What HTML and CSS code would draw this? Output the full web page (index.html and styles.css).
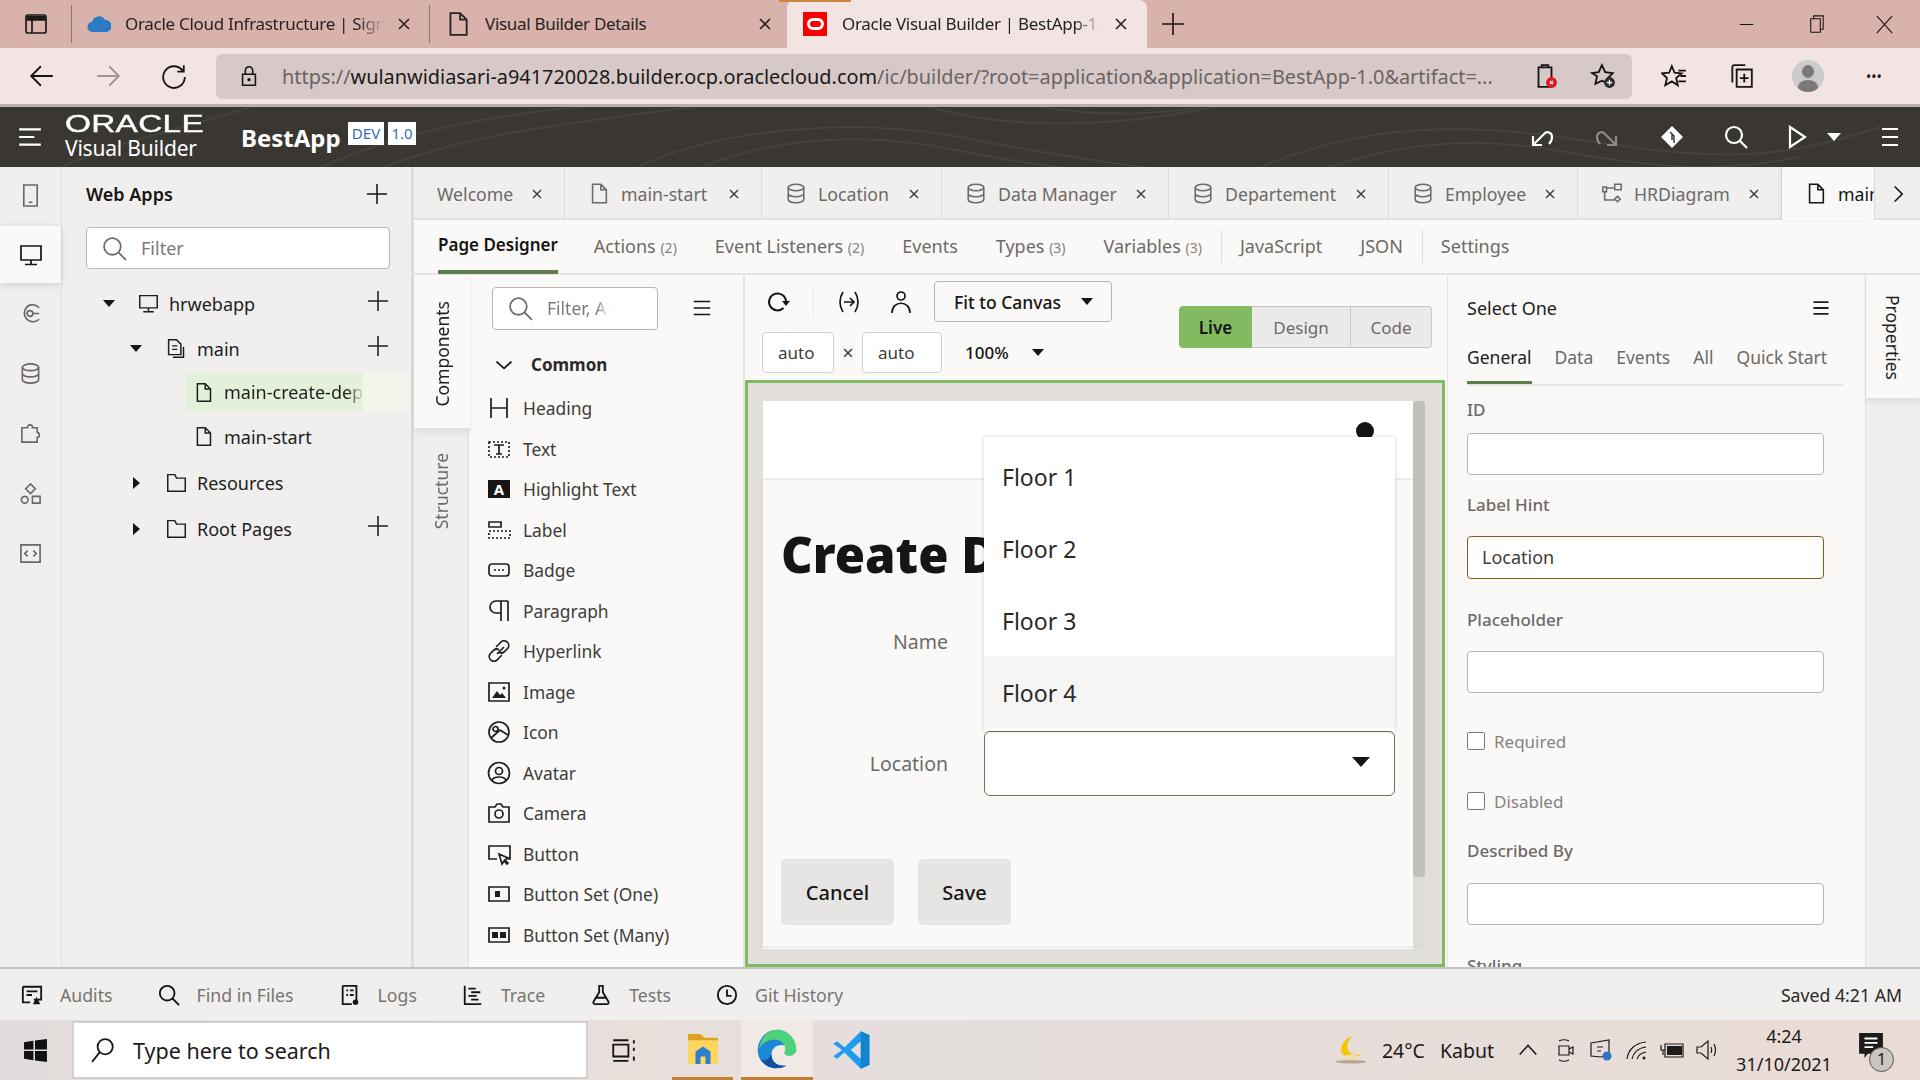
FILE: index.html
```html
<!DOCTYPE html>
<html lang="en">
<head>
  <meta charset="UTF-8">
  <title>Oracle Visual Builder | BestApp-1.0</title>
  <link rel="stylesheet" href="styles.css">
</head>
<body>
  <svg class="icon-defs" xmlns="http://www.w3.org/2000/svg">
    <symbol id="i-doc" viewBox="0 0 24 24"><path d="M5 2h9l6 6v14H5zM14 2v6h6"/></symbol>
    <symbol id="i-db" viewBox="0 0 24 24"><ellipse cx="12" cy="5.500" rx="8.500" ry="3.500"/><path d="M3.500 5.500v13c0 2 3.800 3.500 8.500 3.500s8.500-1.500 8.500-3.500v-13M3.500 12c0 2 3.800 3.500 8.500 3.500s8.500-1.500 8.500-3.500"/></symbol>
    <symbol id="i-plus" viewBox="0 0 24 24"><path d="M12 1v22M1 12h22"/></symbol>
    <symbol id="i-x" viewBox="0 0 24 24"><path d="M6 6l12 12M18 6L6 18"/></symbol>
    <symbol id="i-search" viewBox="0 0 24 24"><circle cx="10" cy="10" r="8"/><path d="M15.800 15.800L23 23"/></symbol>
    <symbol id="i-monitor" viewBox="0 0 24 24"><path d="M2 3h20v14H2zM12 17v4M6 21.500h12"/></symbol>
    <symbol id="i-folder" viewBox="0 0 24 24"><path d="M2 3h8l2 4h10v15H2z"/></symbol>
    <symbol id="i-menu" viewBox="0 0 24 24"><path d="M3 5h18M3 12h18M3 19h18"/></symbol>
    <symbol id="i-diagram" viewBox="0 0 24 24"><path d="M15 2h7v6h-7zM2 5h4v5H2zM15 18l3-3 3 3-3 3zM6 6h9M4 10v9h11"/></symbol>
  </svg>

  <div class="browser-tabs">
    <svg class="tabs-side" viewBox="0 0 24 24"><path d="M4 3h16a2 2 0 0 1 2 2v14a2 2 0 0 1-2 2H4a2 2 0 0 1-2-2V5a2 2 0 0 1 2-2zM2 8h20M8 8v13"/><path class="solid" d="M3 4h18v4H3z"/></svg>
    <div class="browser-tab first">
      <svg class="cloud" viewBox="0 0 24 24"><path d="M6 20a5 5 0 0 1-1-10 7 7 0 0 1 13-2 6 6 0 0 1 1 12z"/></svg>
      <span class="tab-label">Oracle Cloud Infrastructure | Sign In</span>
      <svg class="tab-close"><use href="#i-x"/></svg>
    </div>
    <div class="browser-tab second">
      <svg class="tab-doc"><use href="#i-doc"/></svg>
      <span class="tab-label">Visual Builder Details</span>
      <svg class="tab-close"><use href="#i-x"/></svg>
    </div>
    <div class="browser-tab current">
      <span class="oracle-fav"><i></i></span>
      <span class="tab-label">Oracle Visual Builder | BestApp-1.0</span>
      <svg class="tab-close"><use href="#i-x"/></svg>
    </div>
    <svg class="new-tab"><use href="#i-plus"/></svg>
    <div class="window-btns">
      <svg viewBox="0 0 24 24"><path d="M5 12h14"/></svg>
      <svg viewBox="0 0 24 24"><path d="M7 6h10v14H7zM10 6V3h10v14h-3"/></svg>
      <svg viewBox="0 0 24 24"><path d="M4 3l16 18M20 3L4 21"/></svg>
    </div>
  </div>

  <div class="browser-bar">
    <svg class="nav-icon" viewBox="0 0 24 24"><path d="M22 12H3M11 3l-9 9 9 9"/></svg>
    <svg class="nav-icon muted" viewBox="0 0 24 24"><path d="M2 12h19M13 3l9 9-9 9"/></svg>
    <svg class="nav-icon" viewBox="0 0 24 24"><path d="M20 7a10 10 0 1 0 2 6M21 2v6h-6"/></svg>
    <div class="url-bar">
      <svg class="lock" viewBox="0 0 24 24"><path d="M5 10h14v12H5zM8 10V6a4 4 0 0 1 8 0v4"/><circle cx="12" cy="16" r="1"/></svg>
      <span class="url"><span class="url-dim">https://</span>wulanwidiasari-a941720028.builder.ocp.oraclecloud.com<span class="url-dim">/ic/builder/?root=application&amp;application=BestApp-1.0&amp;artifact=...</span></span>
      <span class="url-icon">
        <svg viewBox="0 0 24 24"><path d="M6 4h12v18H6zM9 4V2h6v2"/><circle class="red-dot" cx="18" cy="18" r="5"/><path class="dot-mark" d="M16.500 16.500l3 3M19.500 16.500l-3 3"/></svg>
      </span>
      <span class="url-icon">
        <svg viewBox="0 0 24 24"><path d="M11 2l3 6.500 7 .8-5 5 1 5-6-3-6 3 1.500-7L2 9.300l6-.8z"/><circle class="dark-dot" cx="18" cy="18" r="5"/><path class="dot-mark" d="M18 15.500v5M15.500 18h5"/></svg>
      </span>
    </div>
    <svg class="bar-icon fav" viewBox="0 0 24 24"><path d="M10 3l2.500 6 6.500.6-5 4.400 1.500 6.500-5.500-3.500-6 3.500 1.500-6.500L1 9.600l6.500-.6zM16 7h7M18 12h5M16 17h7"/></svg>
    <svg class="bar-icon coll" viewBox="0 0 24 24"><path d="M8 6h14v16H8zM4 18V4a2 2 0 0 1 2-2h10M15 10v8M11 14h8"/></svg>
    <span class="profile"><i></i><b></b></span>
    <span class="more">&#8226;&#8226;&#8226;</span>
  </div>

  <header class="app-header">
    <svg class="wood" viewBox="0 0 1920 60" preserveAspectRatio="none">
      <path d="M300 70C420 10 560 0 700-10M360 70C470 20 600 15 760-10M620 70C700 20 860 10 960 30S1140 60 1220 70M680 70C760 30 860 24 950 42S1100 66 1160 70M900-10C1000 30 1140 20 1260-10M1000-10C1080 14 1180 10 1240-10M1240 70C1320 30 1420 10 1560 30S1760 60 1880 20M1300 70C1380 40 1460 26 1560 44S1720 66 1800 50M40 70C120 30 200 20 280-10"/>
    </svg>
    <svg class="hamburger" viewBox="0 0 24 24"><path d="M2 5h20M2 12h14M2 19h20"/></svg>
    <div class="brand">
      <span class="brand-top">ORACLE</span>
      <span class="brand-sub">Visual Builder</span>
    </div>
    <span class="app-name">BestApp</span>
    <span class="badge dev">DEV</span>
    <span class="badge ver">1.0</span>
    <div class="header-actions">
      <svg class="act-undo" viewBox="0 0 24 24"><path d="M3 11v9h9M4 19L15 8c3-2 7 0 7 4 0 3-1 5-3 7"/></svg>
      <svg class="act-redo" viewBox="0 0 24 24"><path d="M21 11v9h-9M20 19L9 8c-3-2-7 0-7 4 0 3 1 5 3 7"/></svg>
      <svg class="act-git" viewBox="0 0 24 24"><path class="solid-white" d="M12 1l11 11-11 11L1 12z"/><path class="git-line" d="M10 7l4 4v7M12 9v6"/></svg>
      <svg class="act-search"><use href="#i-search"/></svg>
      <svg class="act-play" viewBox="0 0 24 24"><path d="M5 2l15 10L5 22z"/></svg>
      <span class="act-caret"></span>
      <svg class="act-menu" viewBox="0 0 24 24"><path d="M4 4h16M4 12h16M4 20h16"/></svg>
    </div>
  </header>

  <main class="workspace">
    <nav class="rail">
      <div class="rail-item"><svg viewBox="0 0 24 24"><path d="M5 1h14v22H5zM10 19h4"/></svg></div>
      <div class="rail-item active"><svg class="dark"><use href="#i-monitor"/></svg></div>
      <div class="rail-item"><svg viewBox="0 0 24 24"><path d="M21 12H14M21 6a10 10 0 0 0-9-3 9 9 0 1 0 9 15"/><circle cx="11.500" cy="12" r="3"/></svg></div>
      <div class="rail-item"><svg><use href="#i-db"/></svg></div>
      <div class="rail-item"><svg viewBox="0 0 24 24"><path d="M3 6h6c-1-4 6-4 5 0h5v5c3 0 3 5 0 5v5H3z"/></svg></div>
      <div class="rail-item"><svg viewBox="0 0 24 24"><path d="M12 2l5 5-5 5-5-5zM14 15h8v7h-8z"/><circle cx="6" cy="18.500" r="3.500"/></svg></div>
      <div class="rail-item"><svg viewBox="0 0 24 24"><path d="M2 3h20v18H2zM9 9l-3 3 3 3M15 9l3 3-3 3"/></svg></div>
    </nav>

    <section class="nav-panel">
      <div class="nav-title"><h2>Web Apps</h2><svg class="add"><use href="#i-plus"/></svg></div>
      <div class="filter nav-filter">
        <svg><use href="#i-search"/></svg><span>Filter</span>
      </div>
      <ul class="tree">
        <li class="lvl1"><i class="tri down"></i><svg class="t-icon"><use href="#i-monitor"/></svg><span>hrwebapp</span><svg class="add"><use href="#i-plus"/></svg></li>
        <li class="lvl2"><i class="tri down"></i><svg class="t-icon" viewBox="0 0 24 24"><path d="M3 2h9l5 5v12H3zM7 9h6M7 13h6M20 10v12H8"/></svg><span>main</span><svg class="add"><use href="#i-plus"/></svg></li>
        <li class="lvl3 selected"><svg class="t-icon"><use href="#i-doc"/></svg><span class="cut">main-create-department</span></li>
        <li class="lvl3 start"><svg class="t-icon"><use href="#i-doc"/></svg><span>main-start</span></li>
        <li class="lvl2 gap"><i class="tri right"></i><svg class="t-icon"><use href="#i-folder"/></svg><span>Resources</span></li>
        <li class="lvl2"><i class="tri right"></i><svg class="t-icon"><use href="#i-folder"/></svg><span>Root Pages</span><svg class="add"><use href="#i-plus"/></svg></li>
      </ul>
    </section>

    <section class="editor">
      <div class="doc-tabs">
        <div class="doc-tab"><span>Welcome</span><svg class="close"><use href="#i-x"/></svg></div>
        <div class="doc-tab"><svg class="ico"><use href="#i-doc"/></svg><span>main-start</span><svg class="close"><use href="#i-x"/></svg></div>
        <div class="doc-tab"><svg class="ico"><use href="#i-db"/></svg><span>Location</span><svg class="close"><use href="#i-x"/></svg></div>
        <div class="doc-tab"><svg class="ico"><use href="#i-db"/></svg><span>Data Manager</span><svg class="close"><use href="#i-x"/></svg></div>
        <div class="doc-tab"><svg class="ico"><use href="#i-db"/></svg><span>Departement</span><svg class="close"><use href="#i-x"/></svg></div>
        <div class="doc-tab"><svg class="ico"><use href="#i-db"/></svg><span>Employee</span><svg class="close"><use href="#i-x"/></svg></div>
        <div class="doc-tab"><svg class="ico"><use href="#i-diagram"/></svg><span>HRDiagram</span><svg class="close"><use href="#i-x"/></svg></div>
        <div class="doc-tab current"><svg class="ico"><use href="#i-doc"/></svg><span>main-create</span></div>
        <div class="doc-next"><svg viewBox="0 0 24 24"><path d="M8 3l9 9-9 9"/></svg></div>
      </div>

      <div class="sub-tabs">
        <a class="active">Page Designer</a>
        <a>Actions <small>(2)</small></a>
        <a>Event Listeners <small>(2)</small></a>
        <a>Events</a>
        <a>Types <small>(3)</small></a>
        <a>Variables <small>(3)</small></a>
        <a class="split">JavaScript</a>
        <a>JSON</a>
        <a class="split">Settings</a>
      </div>

      <div class="editor-body">
        <div class="side-tabs">
          <div class="side-tab active"><span>Components</span></div>
          <div class="side-tab"><span>Structure</span></div>
        </div>

        <aside class="palette">
          <div class="palette-top">
            <div class="filter pal-filter"><svg><use href="#i-search"/></svg><span>Filter, Alt</span></div>
            <svg class="pal-menu"><use href="#i-menu"/></svg>
          </div>
          <div class="pal-group"><svg viewBox="0 0 24 24"><path d="M3 8l9 8 9-8"/></svg><b>Common</b></div>
          <ul class="pal-list">
            <li><svg viewBox="0 0 24 24"><path d="M4 2v20M20 2v20M4 12h16"/></svg>Heading</li>
            <li><svg viewBox="0 0 24 24"><path class="dots" d="M2 5h20v15H2z"/><path d="M7 8h10M12 8v9M9 17h6"/></svg>Text</li>
            <li><svg class="filled-a" viewBox="0 0 24 24"><rect x="1" y="3" width="22" height="18"/><text x="12" y="18" text-anchor="middle">A</text></svg>Highlight Text</li>
            <li><svg viewBox="0 0 24 24"><path d="M2 4h12v5H2z"/><path class="dots" d="M2 13h21v7H2z"/></svg>Label</li>
            <li><svg viewBox="0 0 24 24"><rect x="2" y="6" width="20" height="12" rx="3"/><path class="dots" d="M7 12h11"/></svg>Badge</li>
            <li><svg viewBox="0 0 24 24"><path d="M21 2H9a6 6 0 0 0 0 12h5M14 2v20M21 2v20"/></svg>Paragraph</li>
            <li><svg viewBox="0 0 24 24"><path d="M10 15l7-7M9 8l4-4a4 4 0 0 1 8 5l-4 4a4 4 0 0 1-5 0M15 16l-4 4a4 4 0 0 1-8-5l4-4a4 4 0 0 1 5 0"/></svg>Hyperlink</li>
            <li><svg viewBox="0 0 24 24"><path d="M2 3h20v18H2z"/><path class="solid" d="M5 18l5-7 3 4 2-2 4 5z"/><circle class="solid" cx="17" cy="8" r="1.500"/></svg>Image</li>
            <li><svg viewBox="0 0 24 24"><circle cx="12" cy="12" r="10"/><circle cx="8.500" cy="9" r="2.500"/><path d="M4 18l9-8 8 5"/></svg>Icon</li>
            <li><svg viewBox="0 0 24 24"><circle cx="12" cy="12" r="10.500"/><circle cx="12" cy="10" r="3.500"/><path d="M5 19c2-4 12-4 14 0"/></svg>Avatar</li>
            <li><svg viewBox="0 0 24 24"><path d="M2 6h6l2-3h4l2 3h6v15H2z"/><circle cx="12" cy="13" r="4"/></svg>Camera</li>
            <li><svg viewBox="0 0 24 24"><path d="M10 17H2V4h21v13h-2M12 12l3 10 2-3 3 3 1-1-3-3 3-2z"/></svg>Button</li>
            <li><svg viewBox="0 0 24 24"><path d="M2 5h20v14H2z"/><path class="solid" d="M8 9h5v6H8z"/></svg>Button Set (One)</li>
            <li><svg viewBox="0 0 24 24"><path d="M2 5h20v14H2z"/><path class="solid" d="M5 9h6v6H5zM13 9h6v6h-6z"/></svg>Button Set (Many)</li>
          </ul>
        </aside>

        <section class="designer">
          <div class="designer-tools">
            <div class="tool-rows">
              <div class="tool-row">
                <svg class="t-refresh" viewBox="0 0 24 24"><path d="M20 11a8.500 8.500 0 1 0-2.500 7"/><path class="solid" d="M16 11h8l-4 5z"/></svg>
                <i class="tool-sep"></i>
                <svg class="t-width" viewBox="0 0 24 24"><path d="M6 2C2 8 2 16 6 22M18 2c4 6 4 14 0 20M7 12h10M13 8l4 4-4 4"/></svg>
                <svg class="t-user" viewBox="0 0 24 24"><circle cx="12" cy="6" r="4"/><path d="M3 23c0-13 18-13 18 0"/></svg>
                <div class="fit-btn"><span>Fit to Canvas</span><i class="tri down"></i></div>
              </div>
              <div class="tool-row size-row">
                <span class="size-box first">auto</span>
                <span class="times">&times;</span>
                <span class="size-box second">auto</span>
                <span class="zoom-val">100%</span>
                <i class="tri down"></i>
              </div>
            </div>
            <div class="segmented">
              <span class="seg live">Live</span>
              <span class="seg design">Design</span>
              <span class="seg code">Code</span>
            </div>
          </div>

          <div class="canvas">
            <div class="page">
              <div class="page-head"></div>
              <div class="page-body">
                <h1>Create Department</h1>
                <div class="form-row"><label>Name</label><div class="field"></div></div>
                <div class="form-row"><label>Location</label><div class="field select"><i class="tri down"></i></div></div>
                <div class="btn-row"><button>Cancel</button><button>Save</button></div>
                <div class="page-foot"></div>
              </div>
              <span class="user-dot"></span>
              <ul class="popup">
                <li>Floor 1</li>
                <li>Floor 2</li>
                <li>Floor 3</li>
                <li class="hover">Floor 4</li>
              </ul>
            </div>
            <div class="scrollbar"><i></i></div>
          </div>
        </section>

        <aside class="props">
          <div class="props-head"><span>Select One</span><svg><use href="#i-menu"/></svg></div>
          <div class="props-tabs">
            <a class="active">General</a><a>Data</a><a>Events</a><a>All</a><a>Quick Start</a>
          </div>
          <label class="p-label first">ID</label>
          <div class="p-input"></div>
          <label class="p-label hint">Label Hint</label>
          <div class="p-input focus">Location</div>
          <label class="p-label">Placeholder</label>
          <div class="p-input"></div>
          <div class="check first"><i></i>Required</div>
          <div class="check"><i></i>Disabled</div>
          <label class="p-label described">Described By</label>
          <div class="p-input"></div>
          <label class="p-label">Styling</label>
        </aside>

        <div class="prop-rail"><div class="prop-tab"><span>Properties</span></div></div>
      </div>
    </section>
  </main>

  <footer class="tool-bar">
    <span class="tool-item"><svg viewBox="0 0 24 24"><path d="M2 3h20v14h-8M2 3v17h8M6 8h12M6 12h6"/><path class="solid" d="M17 14l4 8h-8z"/></svg>Audits</span>
    <span class="tool-item"><svg><use href="#i-search"/></svg>Find in Files</span>
    <span class="tool-item"><svg viewBox="0 0 24 24"><path d="M4 2h15v16M4 2v20h10M8 7h2M12 7h4M8 12h2M12 12h4"/><circle class="solid" cx="18" cy="20" r="3"/></svg>Logs</span>
    <span class="tool-item"><svg viewBox="0 0 24 24"><path d="M3 2v20h18M7 5h8M10 9h10M7 13h9M10 17h8"/></svg>Trace</span>
    <span class="tool-item"><svg viewBox="0 0 24 24"><path d="M9 2h6M10 2v7L4 19c-1 2 0 3 2 3h12c2 0 3-1 2-3l-6-10V2M7 15h10"/></svg>Tests</span>
    <span class="tool-item"><svg viewBox="0 0 24 24"><circle cx="12" cy="12" r="10"/><path d="M12 6v7h5"/></svg>Git History</span>
    <span class="saved">Saved 4:21 AM</span>
  </footer>

  <div class="taskbar">
    <svg class="win-logo" viewBox="0 0 24 24"><path d="M1 4l9-1.300V11H1zM11.500 2.400L23 1v10H11.500zM1 12.500h9v8.800L1 20zM11.500 12.500H23V23l-11.500-1.500z"/></svg>
    <div class="task-search">
      <svg viewBox="0 0 24 24"><circle cx="14" cy="9" r="7"/><path d="M9 14L2 23"/></svg>
      <span>Type here to search</span>
    </div>
    <svg class="task-view" viewBox="0 0 24 24"><path d="M3 3h14M3 7h14v11H3zM3 22h14M22 3v3M22 10v3M22 18v4"/></svg>
    <span class="task-app files">
      <svg viewBox="0 0 32 32"><path fill="#dca31d" d="M4 4h10l3 3h11v6H4z"/><path fill="#fcd65f" d="M4 9h24v19H4z"/><path fill="#2f7fd1" d="M10 28V18l6-4 6 4v10h-4v-6h-4v6z"/></svg>
    </span>
    <span class="task-app edge">
      <svg viewBox="0 0 32 32"><path fill="#1d87d6" d="M16 2C8 2 2 9 2 17c0 7 6 13 13 13 3 0 6-1 8-2-6 1-11-2-11-8 0-4 3-7 7-7s6 2 6 5h5C30 9 24 2 16 2z"/><path fill="#4fd07a" d="M16 2c7 0 14 6 14 14 0 3-2 5-5 5-2 0-3-1-4-2 1-1 1-2 1-3 0-4-4-7-8-7-5 0-9 3-11 7C4 8 9 2 16 2z"/><path fill="#114f9e" d="M12 20c0 6 5 9 11 8-2 1.500-5 2-8 2-5 0-9-3-11-7 2 2 5 2 8-3z"/></svg>
    </span>
    <span class="task-app code-app">
      <svg viewBox="0 0 32 32"><path fill="#1f9cf0" d="M23 1l7 3v24l-7 3-13-13-6 5-3-2 7-5-7-5 3-2 6 5zM23 9l-8 7 8 7z"/><path fill="#0065a9" d="M23 1l7 3v24l-7 3z" opacity=".45"/></svg>
    </span>
    <div class="tray">
      <svg class="weather" viewBox="0 0 40 32"><path fill="#f7c400" d="M22 1c-8 6-9 18 2 20 4 1 7 0 8-1-3 6-16 8-21 1C6 14 12 3 22 1z"/><ellipse cx="20" cy="24" rx="9" ry="3" fill="#efdcb8"/><ellipse cx="20" cy="29" rx="17" ry="2" fill="#b9a58e"/></svg>
      <span class="temp">24°C</span>
      <span class="cond">Kabut</span>
      <svg class="chev" viewBox="0 0 24 24"><path d="M3 17l9-10 9 10"/></svg>
      <svg class="tray-i meet" viewBox="0 0 24 24"><path d="M6 8h10v9H6zM16 11l4-2v7l-4-2M6 3c3-1.500 7-1.500 10 0M6 22c3 1.500 7 1.500 10 0"/></svg>
      <svg class="tray-i sync" viewBox="0 0 24 24"><path d="M3 5l18-3v14l-8 3-10-1zM9 9h6M9 13h4"/><circle class="blue-dot" cx="19" cy="18" r="4.500"/></svg>
      <svg class="tray-i wifi" viewBox="0 0 24 24"><path d="M2 21C3 12 10 5 21 4M7 21c1-6 6-11 14-12M12 21c1-3 4-6 9-7"/><circle class="solid" cx="19" cy="20" r="1.500"/></svg>
      <svg class="tray-i batt" viewBox="0 0 24 24"><path class="solid" d="M7 8h15v9H7z"/><path d="M5 6h18v13H5zM1 7v5h4M3 12v5"/></svg>
      <svg class="tray-i vol" viewBox="0 0 24 24"><path d="M2 9h4l7-6v18l-7-6H2zM16 9c1 2 1 4 0 6M19 6c2 4 2 8 0 12"/></svg>
      <div class="clock"><span>4:24</span><span>31/10/2021</span></div>
      <div class="notif"><svg viewBox="0 0 24 24"><path class="solid" d="M1 1h22v19H9l-3 4v-4H1z"/><path class="note-lines" d="M6 6h12M6 10h12M6 14h8"/></svg><b>1</b></div>
    </div>
  </div>
</body>
</html>
```

FILE: styles.css
```css
* {
  box-sizing: border-box;
}

html, body {
  margin: 0;
  width: 1920px;
  height: 1080px;
  overflow: hidden;
}

body {
  font-family: "Noto Sans", "Open Sans", sans-serif;
  color: #161513;
  background: #f0efed;
}

svg {
  fill: none;
  stroke: currentColor;
  stroke-width: 1.700;
  flex: none;
}

ul {
  list-style: none;
  margin: 0;
  padding: 0;
}

.icon-defs {
  display: none;
}

.solid {
  fill: currentColor;
  stroke: none;
}

.tri {
  display: block;
  width: 0;
  height: 0;
  flex: none;
}

.tri.down {
  border-left: 6px solid transparent;
  border-right: 6px solid transparent;
  border-top: 7px solid #161513;
}

.tri.right {
  border-top: 6px solid transparent;
  border-bottom: 6px solid transparent;
  border-left: 7px solid #161513;
}

/* browser chrome */
.browser-tabs {
  height: 48px;
  background: #d8b2ab;
  display: flex;
  align-items: center;
  position: relative;
}

/* loading strip of the window behind, sits over the tab edge */
.browser-tabs::before {
  content: "";
  position: absolute;
  left: 779px;
  top: 0;
  width: 72px;
  height: 2px;
  background: #c9893f;
  z-index: 1;
}

.tabs-side {
  width: 24px;
  height: 24px;
  margin-left: 24px;
  margin-right: 23px;
  color: #1c1a1a;
}

.browser-tab {
  height: 48px;
  display: flex;
  align-items: center;
  font-size: 17px;
  letter-spacing: -0.300px;
  color: #262323;
  flex: none;
}

.browser-tab.first {
  width: 358px;
}

.browser-tab.first::before,
.browser-tab.second::before {
  content: "";
  width: 1px;
  height: 38px;
  background: #8d7471;
  flex: none;
  margin-right: 15px;
}

.browser-tab.second {
  width: 358px;
}

.browser-tab.current {
  width: 360px;
  background: #f1e4e3;
  border-radius: 8px 8px 0 0;
  padding-left: 16px;
}

.cloud {
  width: 24px;
  height: 24px;
  fill: #2a7ac6;
  stroke: none;
  margin-right: 14px;
}

.tab-doc {
  width: 26px;
  height: 28px;
  margin-right: 14px;
}

.first .tab-label {
  width: 259px;
}

.second .tab-label {
  width: 265px;
}

.current .tab-label {
  width: 259px;
}

.tab-label {
  white-space: nowrap;
  overflow: hidden;
  margin-top: -2px;
  -webkit-mask-image: linear-gradient(90deg, #000 90%, transparent);
  mask-image: linear-gradient(90deg, #000 90%, transparent);
}

.second .tab-label {
  -webkit-mask-image: none;
  mask-image: none;
}

.tab-close {
  width: 20px;
  height: 20px;
  margin-left: 10px;
  stroke-width: 2;
}

.second .tab-close {
  margin-left: 5px;
}

.oracle-fav {
  width: 24px;
  height: 24px;
  background: #f80000;
  display: flex;
  align-items: center;
  justify-content: center;
  margin-right: 15px;
  flex: none;
}

.oracle-fav i {
  width: 17px;
  height: 12px;
  border: 3px solid #fff;
  border-radius: 6px;
}

.new-tab {
  width: 24px;
  height: 24px;
  margin-left: 14px;
  stroke-width: 1.600;
}

.window-btns {
  margin-left: auto;
  display: flex;
  gap: 46px;
  padding-right: 24px;
}

.window-btns svg {
  width: 23px;
  height: 23px;
  stroke-width: 1.100;
}

.browser-bar {
  height: 59px;
  background: #f1e4e3;
  border-bottom: 3px solid #bdaeac;
  display: flex;
  align-items: center;
  padding-left: 29px;
}

.nav-icon {
  width: 26px;
  height: 26px;
  margin-right: 40px;
}

.nav-icon.muted {
  color: #a09392;
}

.url-bar {
  width: 1416px;
  height: 45px;
  margin-left: -11px;
  background: #d6c9c8;
  border-radius: 6px;
  display: flex;
  align-items: center;
  padding-left: 22px;
  flex: none;
}

.lock {
  width: 22px;
  height: 24px;
  margin-right: 22px;
}

.url {
  font-size: 19.900px;
  color: #1c1a1a;
  white-space: nowrap;
  width: 1213px;
  overflow: hidden;
  flex: none;
  margin-right: 21px;
}

.url-dim {
  color: #6b6464;
}

.url-icon {
  width: 58px;
  display: flex;
  justify-content: center;
  flex: none;
}

.url-icon svg {
  width: 26px;
  height: 28px;
}

.red-dot {
  fill: #e81123;
  stroke: none;
}

.dark-dot {
  fill: #2b2a2a;
  stroke: none;
}

.dot-mark {
  stroke: #fff;
  stroke-width: 1.200;
}

.bar-icon {
  width: 26px;
  height: 26px;
}

.bar-icon.fav {
  margin-left: 29px;
}

.bar-icon.coll {
  margin-left: 41px;
}

.profile {
  width: 32px;
  height: 32px;
  margin-left: 38px;
  border-radius: 50%;
  background: #cdcaca;
  position: relative;
  overflow: hidden;
  flex: none;
}

.profile i {
  position: absolute;
  left: 10px;
  top: 5px;
  width: 12px;
  height: 13px;
  border-radius: 50%;
  background: #7b7878;
}

.profile b {
  position: absolute;
  left: 6px;
  top: 20px;
  width: 20px;
  height: 14px;
  border-radius: 50%;
  background: #7b7878;
}

.more {
  margin-left: 42px;
  font-size: 14px;
  letter-spacing: 0;
}

/* app header */
.app-header {
  height: 60px;
  background: #3a3632;
  color: #fff;
  display: flex;
  align-items: center;
  position: relative;
  overflow: hidden;
}

.wood {
  position: absolute;
  inset: 0;
  width: 100%;
  height: 100%;
  stroke: #45413c;
  stroke-width: 2;
}

.hamburger {
  width: 26px;
  height: 26px;
  margin-left: 17px;
  stroke-width: 2;
  position: relative;
}

.brand {
  margin-left: 22px;
  width: 176px;
  display: flex;
  flex-direction: column;
  position: relative;
}

.brand-top {
  font-family: "Liberation Sans", sans-serif;
  font-size: 23.500px;
  line-height: 22px;
  letter-spacing: 0.200px;
  transform: scaleX(1.420);
  transform-origin: left;
  -webkit-text-stroke: 0.400px #fff;
}

.brand-sub {
  font-size: 21px;
  line-height: 26px;
  letter-spacing: -0.200px;
}

.app-name {
  font-size: 24px;
  font-weight: 700;
  position: relative;
  width: 107px;
}

.badge {
  height: 23px;
  background: #fff;
  color: #2f6fb0;
  font-size: 15px;
  line-height: 23px;
  text-align: center;
  margin-top: -8px;
  position: relative;
}

.badge.dev {
  width: 36px;
}

.badge.ver {
  width: 28px;
  margin-left: 4px;
}

.header-actions {
  margin-left: auto;
  display: flex;
  align-items: center;
  position: relative;
}

.header-actions svg {
  width: 24px;
  height: 24px;
  stroke-width: 2.200;
}

.act-redo {
  margin-left: 41px;
  color: #8d8a86;
}

.header-actions .act-git {
  margin-left: 41px;
}

.solid-white {
  fill: #fff;
  stroke: none;
}

.git-line {
  stroke: #3a3632;
  stroke-width: 1.500;
}

.act-search {
  margin-left: 40px;
}

.act-play {
  margin-left: 37px;
}

.act-caret {
  margin-left: 18px;
  border-left: 7px solid transparent;
  border-right: 7px solid transparent;
  border-top: 8px solid #fff;
}

.act-menu {
  margin-left: 37px;
  margin-right: 18px;
}

/* main area */
.workspace {
  height: 800px;
  display: flex;
  background: #f0efed;
}

.rail {
  width: 62px;
  flex: none;
  border-right: 1px solid #e2e0dd;
}

.rail-item {
  height: 60px;
  display: flex;
  align-items: center;
  justify-content: center;
  color: #6d6663;
}

.rail-item:first-child {
  height: 56px;
}

.rail-item svg {
  width: 23px;
  height: 23px;
}

.rail-item.active {
  background: #faf9f7;
  width: 61px;
  height: 57px;
  margin-top: 3px;
  box-shadow: 0 2px 8px rgba(0, 0, 0, 0.12);
}

.rail-item .dark {
  color: #161513;
  width: 24px;
  height: 24px;
}

.nav-panel {
  width: 352px;
  flex: none;
  border-right: 3px solid #dddcd9;
  padding-left: 24px;
}

.nav-title {
  height: 53px;
  display: flex;
  align-items: center;
  justify-content: space-between;
  padding-right: 23px;
}

.nav-title h2 {
  margin: 0;
  font-size: 18px;
  font-weight: 600;
}

.add {
  width: 22px;
  height: 22px;
}

.filter {
  background: #fff;
  border: 1px solid #b8b6b2;
  border-radius: 4px;
  display: flex;
  align-items: center;
  color: #7c7a76;
  overflow: hidden;
}

.filter svg {
  width: 25px;
  height: 25px;
  color: #6e6c69;
  flex: none;
}

.nav-filter {
  width: 304px;
  height: 42px;
  margin-top: 7px;
  padding-left: 15px;
  gap: 14px;
  font-size: 18px;
}

.tree {
  margin-top: 12px;
  position: relative;
}

.tree li {
  display: flex;
  align-items: center;
  font-size: 18px;
  height: 45px;
  position: relative;
  color: #201e1c;
}

.tree .add {
  position: absolute;
  left: 281px;
  top: 9px;
}

.t-icon {
  width: 21px;
  height: 21px;
  flex: none;
}

.lvl1 {
  padding-left: 17px;
}

.lvl1 .t-icon {
  margin-left: 23px;
  margin-right: 10px;
}

.lvl2 {
  padding-left: 44px;
}

.tree li.lvl2 .t-icon {
  margin-left: 24px;
  margin-right: 10px;
}

.tree .tri.right {
  margin-left: 3px;
  margin-right: 2px;
}

.tree li.lvl3 {
  padding-left: 107px;
  height: 46px;
}

.tree li.lvl3 .t-icon {
  margin-right: 10px;
}

.tree li.start {
  padding-top: 3px;
}

.tree li.gap {
  margin-top: 1px;
  height: 47px;
}

.tree li.selected {
  margin-top: 1px;
  margin-left: 100px;
  padding-left: 7px;
  height: 40px;
  background: linear-gradient(90deg, #e4f1da 0, #e4f1da 175px, #f1f5ec 177px, #f1f5ec 100%);
}

.cut {
  width: 140px;
  overflow: hidden;
  white-space: nowrap;
  -webkit-mask-image: linear-gradient(90deg, #000 88%, transparent);
  mask-image: linear-gradient(90deg, #000 88%, transparent);
}

.editor {
  width: 1506px;
  flex: none;
  display: flex;
  flex-direction: column;
}

.doc-tabs {
  height: 53px;
  display: grid;
  grid-template-columns: 151px 197px 180px 227px 220px 189px 204px 93px 45px;
  background: #f0efed;
  border-bottom: 2px solid #e2e0dd;
}

.doc-tab {
  display: flex;
  align-items: center;
  padding-left: 23px;
  font-size: 17.700px;
  color: #6d6a67;
  border-right: 1px solid #dddcd9;
  position: relative;
  overflow: hidden;
  white-space: nowrap;
}

.doc-tab .ico {
  width: 22px;
  height: 23px;
  margin-right: 11px;
  color: #6d6a67;
}

.doc-tab .close {
  width: 16px;
  height: 16px;
  margin-left: auto;
  margin-right: 19px;
  color: #3b3936;
  stroke-width: 2;
}

.doc-tab.current {
  background: #faf9f7;
  color: #161513;
  height: 53px;
  padding-left: 23px;
  box-shadow: -2px 0 4px rgba(0, 0, 0, 0.06);
}

.doc-tab.current .ico {
  color: #161513;
}

.doc-next {
  display: flex;
  align-items: center;
  justify-content: center;
}

.doc-next svg {
  width: 20px;
  height: 20px;
  stroke-width: 2;
}

.sub-tabs {
  height: 55px;
  background: #faf9f7;
  border-bottom: 2px solid #e6e4e1;
  display: flex;
  align-items: center;
  padding-left: 24px;
  font-size: 18px;
  color: #6d6a67;
}

.sub-tabs a {
  margin-right: 38px;
  position: relative;
  height: 53px;
  line-height: 52px;
}

.sub-tabs a.active {
  color: #161513;
  font-size: 17px;
  font-weight: 600;
  border-bottom: 4px solid #5f7d4f;
  height: 55px;
  margin-right: 36px;
}

.sub-tabs a.split::before {
  content: "";
  position: absolute;
  left: -19px;
  top: 10px;
  bottom: 10px;
  width: 1px;
  background: #dddcd9;
}

.sub-tabs small {
  font-size: 14px;
  color: #85827f;
}

.editor-body {
  flex: 1;
  display: flex;
  min-height: 0;
}

.side-tabs {
  width: 55px;
  flex: none;
  background: #f0efed;
  border-right: 1px solid #e2e0dd;
}

.side-tab {
  display: flex;
  justify-content: center;
  align-items: flex-start;
  color: #6d6a67;
  font-size: 17.500px;
  padding-top: 25px;
}

.side-tab span {
  writing-mode: vertical-rl;
  transform: rotate(180deg);
}

.side-tab.active {
  height: 153px;
  width: 56px;
  padding-top: 26px;
  background: #faf9f7;
  color: #201e1c;
  box-shadow: 0 4px 6px rgba(0, 0, 0, 0.08);
  position: relative;
}

.palette {
  width: 276px;
  flex: none;
  background: #faf9f7;
  border-right: 2px solid #e6e4e1;
  padding-left: 18px;
}

.palette-top {
  display: flex;
  align-items: center;
  height: 66px;
}

.pal-filter {
  width: 166px;
  height: 43px;
  margin-left: 5px;
  padding-left: 15px;
  gap: 14px;
  font-size: 17.500px;
  white-space: nowrap;
}

.pal-filter span {
  width: 62px;
  overflow: hidden;
  -webkit-mask-image: linear-gradient(90deg, #000 80%, transparent);
  mask-image: linear-gradient(90deg, #000 80%, transparent);
}

.pal-menu {
  width: 22px;
  height: 22px;
  margin-left: 33px;
}

.pal-group {
  height: 47px;
  display: flex;
  align-items: center;
  font-size: 17px;
  margin-left: 7px;
}

.pal-group svg {
  width: 20px;
  height: 20px;
  margin-right: 17px;
  stroke-width: 2.200;
}

.pal-group b {
  font-weight: 700;
  color: #2b2927;
}

.pal-list li {
  height: 40.500px;
  display: flex;
  align-items: center;
  gap: 12px;
  font-size: 17.400px;
  color: #3e3c39;
  white-space: nowrap;
}

.pal-list svg {
  width: 24px;
  height: 24px;
  color: #201e1c;
}

.dots {
  stroke-dasharray: 2 2;
}

.filled-a rect {
  fill: #161513;
  stroke: none;
}

.filled-a text {
  fill: #fff;
  stroke: none;
  font-size: 15px;
  font-weight: 700;
  font-family: "Noto Sans", sans-serif;
}

.designer {
  width: 702px;
  flex: none;
  display: flex;
  flex-direction: column;
  background: #faf9f7;
}

.designer-tools {
  height: 105px;
  display: flex;
  padding-left: 17px;
  padding-right: 15px;
  flex: none;
}

.tool-rows {
  display: flex;
  flex-direction: column;
  gap: 10px;
  padding-top: 6px;
}

.tool-row {
  display: flex;
  align-items: center;
  height: 41px;
}

.tool-row > svg {
  width: 24px;
  height: 24px;
}

.t-refresh {
  stroke-width: 2;
  margin-left: 4px;
}

.tool-sep {
  width: 1px;
  height: 32px;
  background: #ecebe8;
  margin-left: 23px;
}

.tool-row .t-width {
  margin-left: 23px;
}

.tool-row .t-user {
  margin-left: 28px;
}

.fit-btn {
  width: 178px;
  height: 41px;
  margin-left: 21px;
  border: 1px solid #b8b6b2;
  border-radius: 4px;
  display: flex;
  align-items: center;
  font-size: 17.500px;
  font-weight: 500;
  padding-left: 19px;
  gap: 20px;
  white-space: nowrap;
}

.size-box {
  height: 41px;
  background: #fff;
  border: 1px solid #d5d3cf;
  border-radius: 4px;
  font-size: 17px;
  line-height: 39px;
  color: #3e3c39;
  padding-left: 15px;
}

.size-box.first {
  width: 72px;
}

.size-box.second {
  width: 80px;
}

.times {
  width: 28px;
  text-align: center;
  font-size: 20px;
  color: #3e3c39;
}

.zoom-val {
  font-size: 17px;
  font-weight: 500;
  margin-left: 23px;
  margin-right: 23px;
}

.segmented {
  margin-left: auto;
  margin-top: 31px;
  display: flex;
  height: 42px;
  font-size: 17px;
  color: #6d6a67;
}

.seg {
  display: flex;
  align-items: center;
  justify-content: center;
  background: #ebeae8;
  border: 1px solid #c8c6c2;
}

.seg.live {
  width: 73px;
  background: #82ba62;
  border-color: #82ba62;
  color: #161513;
  font-weight: 600;
  border-radius: 4px 0 0 4px;
}

.seg.design {
  width: 99px;
  border-left: 0;
}

.seg.code {
  width: 81px;
  border-left: 0;
  border-radius: 0 4px 4px 0;
}

.canvas {
  width: 700px;
  height: 587px;
  flex: none;
  border: 3px solid #7fba62;
  background: #e2dfda;
  padding: 18px 17px 15px 15px;
  display: flex;
}

.page {
  width: 650px;
  display: flex;
  flex-direction: column;
  position: relative;
  overflow: hidden;
}

.page-head {
  height: 79px;
  background: #fff;
  border-bottom: 2px solid #ebebe9;
  flex: none;
}

.page-body {
  flex: 1;
  background: #faf9f7;
  padding-left: 18px;
}

h1 {
  margin: 34px 0 0;
  font-size: 49px;
  line-height: 80px;
  font-weight: 900;
  color: #161513;
  white-space: nowrap;
}

.form-row {
  display: flex;
  align-items: center;
  margin-top: 15px;
  height: 65px;
}

.form-row + .form-row {
  margin-top: 57px;
}

.form-row label {
  width: 167px;
  text-align: right;
  font-size: 19.500px;
  color: #6d6a67;
  margin-right: 36px;
}

.field {
  width: 411px;
  height: 65px;
  background: #fff;
  border: 1px solid #5f7d4f;
  border-radius: 6px;
  flex: none;
  position: relative;
}

.select {
  display: flex;
  align-items: center;
  justify-content: flex-end;
  padding-right: 24px;
}

.select .tri.down {
  border-left-width: 9px;
  border-right-width: 9px;
  border-top-width: 10px;
  margin-top: -3px;
}

.btn-row {
  display: flex;
  gap: 24px;
  margin-top: 63px;
}

.btn-row button {
  height: 66px;
  width: 113px;
  border: 0;
  border-radius: 5px;
  background: #e6e5e3;
  font-family: inherit;
  font-size: 20px;
  font-weight: 500;
  color: #161513;
}

.btn-row button + button {
  width: 93px;
}

.page-foot {
  margin: 21px 0 0 -18px;
  height: 5px;
  background: #fff;
  border-top: 2px solid #ebebe9;
}

.user-dot {
  position: absolute;
  left: 593px;
  top: 21px;
  width: 18px;
  height: 18px;
  border-radius: 50%;
  background: #161513;
}

.popup {
  position: absolute;
  left: 221px;
  top: 36px;
  width: 411px;
  background: #fff;
  box-shadow: 0 0 4px rgba(0, 0, 0, 0.18);
  font-size: 23px;
  color: #2b2927;
  padding: 3px 0;
}

.popup li {
  height: 72px;
  line-height: 74px;
  padding-left: 18px;
}

.popup li.hover {
  background: #f5f5f5;
}

.scrollbar {
  width: 12px;
  background: #dedcd7;
  flex: none;
}

.scrollbar i {
  display: block;
  height: 476px;
  background: #c1bfba;
  border-radius: 4px;
}

.props {
  width: 418px;
  flex: none;
  background: #faf9f7;
  border-left: 1px solid #e6e4e1;
  padding-left: 19px;
  overflow: hidden;
}

.props-head {
  height: 66px;
  display: flex;
  align-items: center;
  font-size: 18px;
  color: #201e1c;
}

.props-head svg {
  width: 20px;
  height: 20px;
  margin-left: auto;
  margin-right: 34px;
  stroke-width: 2.200;
}

.props-tabs {
  height: 45px;
  display: flex;
  gap: 23px;
  font-size: 17.500px;
  color: #6d6a67;
  border-bottom: 2px solid #e6e4e1;
  margin-right: 22px;
  align-items: flex-start;
}

.props-tabs a {
  line-height: 32px;
  height: 43px;
}

.props-tabs a.active {
  color: #201e1c;
  border-bottom: 3px solid #5f7d4f;
}

.p-label {
  display: block;
  font-size: 17px;
  font-weight: 500;
  color: #6d6a67;
  height: 24px;
  line-height: 24px;
  margin-top: 29px;
  margin-bottom: 19px;
}

.p-label.first {
  margin-top: 12px;
  margin-bottom: 11px;
}

.p-label.hint {
  margin-top: 18px;
}

.p-input {
  width: 357px;
  height: 42px;
  background: #fff;
  border: 1px solid #b8b6b2;
  border-radius: 4px;
  font-size: 18px;
  line-height: 40px;
  padding-left: 14px;
  color: #3e3c39;
}

.p-input.focus {
  border-color: #8e5a1c;
  height: 43px;
}

.check {
  display: flex;
  align-items: center;
  gap: 9px;
  height: 24px;
  margin-top: 36px;
  font-size: 17px;
  color: #85827f;
}

.check i {
  width: 18px;
  height: 18px;
  background: #fff;
  border: 1px solid #7c7a76;
  border-radius: 2px;
}

.p-label.described {
  margin-top: 26px;
  margin-bottom: 20px;
}

.prop-rail {
  flex: 1;
  background: #f0efed;
  border-left: 1px solid #e2e0dd;
}

.prop-tab {
  height: 123px;
  background: #faf9f7;
  display: flex;
  justify-content: center;
  align-items: flex-start;
  padding-top: 20px;
  font-size: 17.500px;
  color: #201e1c;
  box-shadow: 0 4px 6px rgba(0, 0, 0, 0.08);
}

.prop-tab span {
  writing-mode: vertical-rl;
}

/* bottom tools */
.tool-bar {
  height: 53px;
  background: #f0efed;
  border-top: 2px solid #c4c3c0;
  display: flex;
  align-items: center;
  font-size: 17.700px;
  color: #777572;
  padding-left: 21px;
}

.tool-item {
  display: flex;
  align-items: center;
  gap: 17px;
  margin-right: 45px;
}

.tool-item svg {
  width: 22px;
  height: 22px;
  color: #161513;
  stroke-width: 2;
}

.saved {
  margin-left: auto;
  margin-right: 18px;
  color: #2b2927;
}

/* windows taskbar */
.taskbar {
  height: 60px;
  background: linear-gradient(90deg, #e1dcdb 0, #e8dfdb 33%, #e4dedd 50%, #eadcd5 100%);
  display: flex;
  align-items: center;
}

.win-logo {
  width: 25px;
  height: 25px;
  margin-left: 23px;
  fill: #111;
  stroke: none;
}

.task-search {
  width: 516px;
  height: 58px;
  margin-left: 24px;
  background: #fff;
  border: 2px solid #d3d0cf;
  display: flex;
  align-items: center;
  padding-left: 16px;
  gap: 17px;
  font-size: 21.500px;
  color: #1c1a1a;
  flex: none;
}

.task-search svg {
  width: 26px;
  height: 26px;
}

.task-view {
  width: 26px;
  height: 26px;
  margin-left: 22px;
}

.task-app {
  height: 60px;
  display: flex;
  align-items: center;
  justify-content: center;
  flex: none;
}

.task-app svg {
  stroke: none;
}

.task-app.files {
  width: 61px;
  margin-left: 36px;
  border-bottom: 3px solid #c67f30;
}

.task-app.files svg {
  width: 40px;
  height: 40px;
}

.task-app.edge {
  width: 72px;
  margin-left: 8px;
  background: #f0e9e6;
  border-bottom: 3px solid #c67f30;
}

.task-app.edge svg {
  width: 44px;
  height: 44px;
}

.task-app.code-app {
  width: 78px;
}

.task-app.code-app svg {
  width: 40px;
  height: 42px;
}

.tray {
  margin-left: auto;
  display: flex;
  align-items: center;
  color: #1c1a1a;
  font-size: 19.500px;
}

.weather {
  width: 36px;
  height: 30px;
  stroke: none;
}

.temp {
  margin-left: 13px;
}

.cond {
  margin-left: 15px;
}

.chev {
  width: 22px;
  height: 22px;
  margin-left: 23px;
}

.tray-i {
  width: 24px;
  height: 24px;
  margin-left: 11px;
  stroke-width: 1.200;
}

.tray-i.meet {
  margin-left: 14px;
}

.tray-i.wifi {
  margin-left: 13px;
}

.blue-dot {
  fill: #2d74c4;
  stroke: none;
}

.clock {
  display: flex;
  flex-direction: column;
  align-items: center;
  font-size: 18px;
  line-height: 28px;
  margin-left: 11px;
  width: 108px;
}

.notif {
  position: relative;
  width: 32px;
  height: 36px;
  margin-left: 20px;
  margin-right: 30px;
}

.notif svg {
  width: 26px;
  height: 26px;
}

.note-lines {
  stroke: #fff;
}

.notif b {
  position: absolute;
  right: -4px;
  bottom: -4px;
  width: 25px;
  height: 25px;
  border-radius: 50%;
  background: #c9c5c3;
  border: 1px solid #555;
  font-size: 16px;
  font-weight: 400;
  line-height: 23px;
  text-align: center;
}
```
